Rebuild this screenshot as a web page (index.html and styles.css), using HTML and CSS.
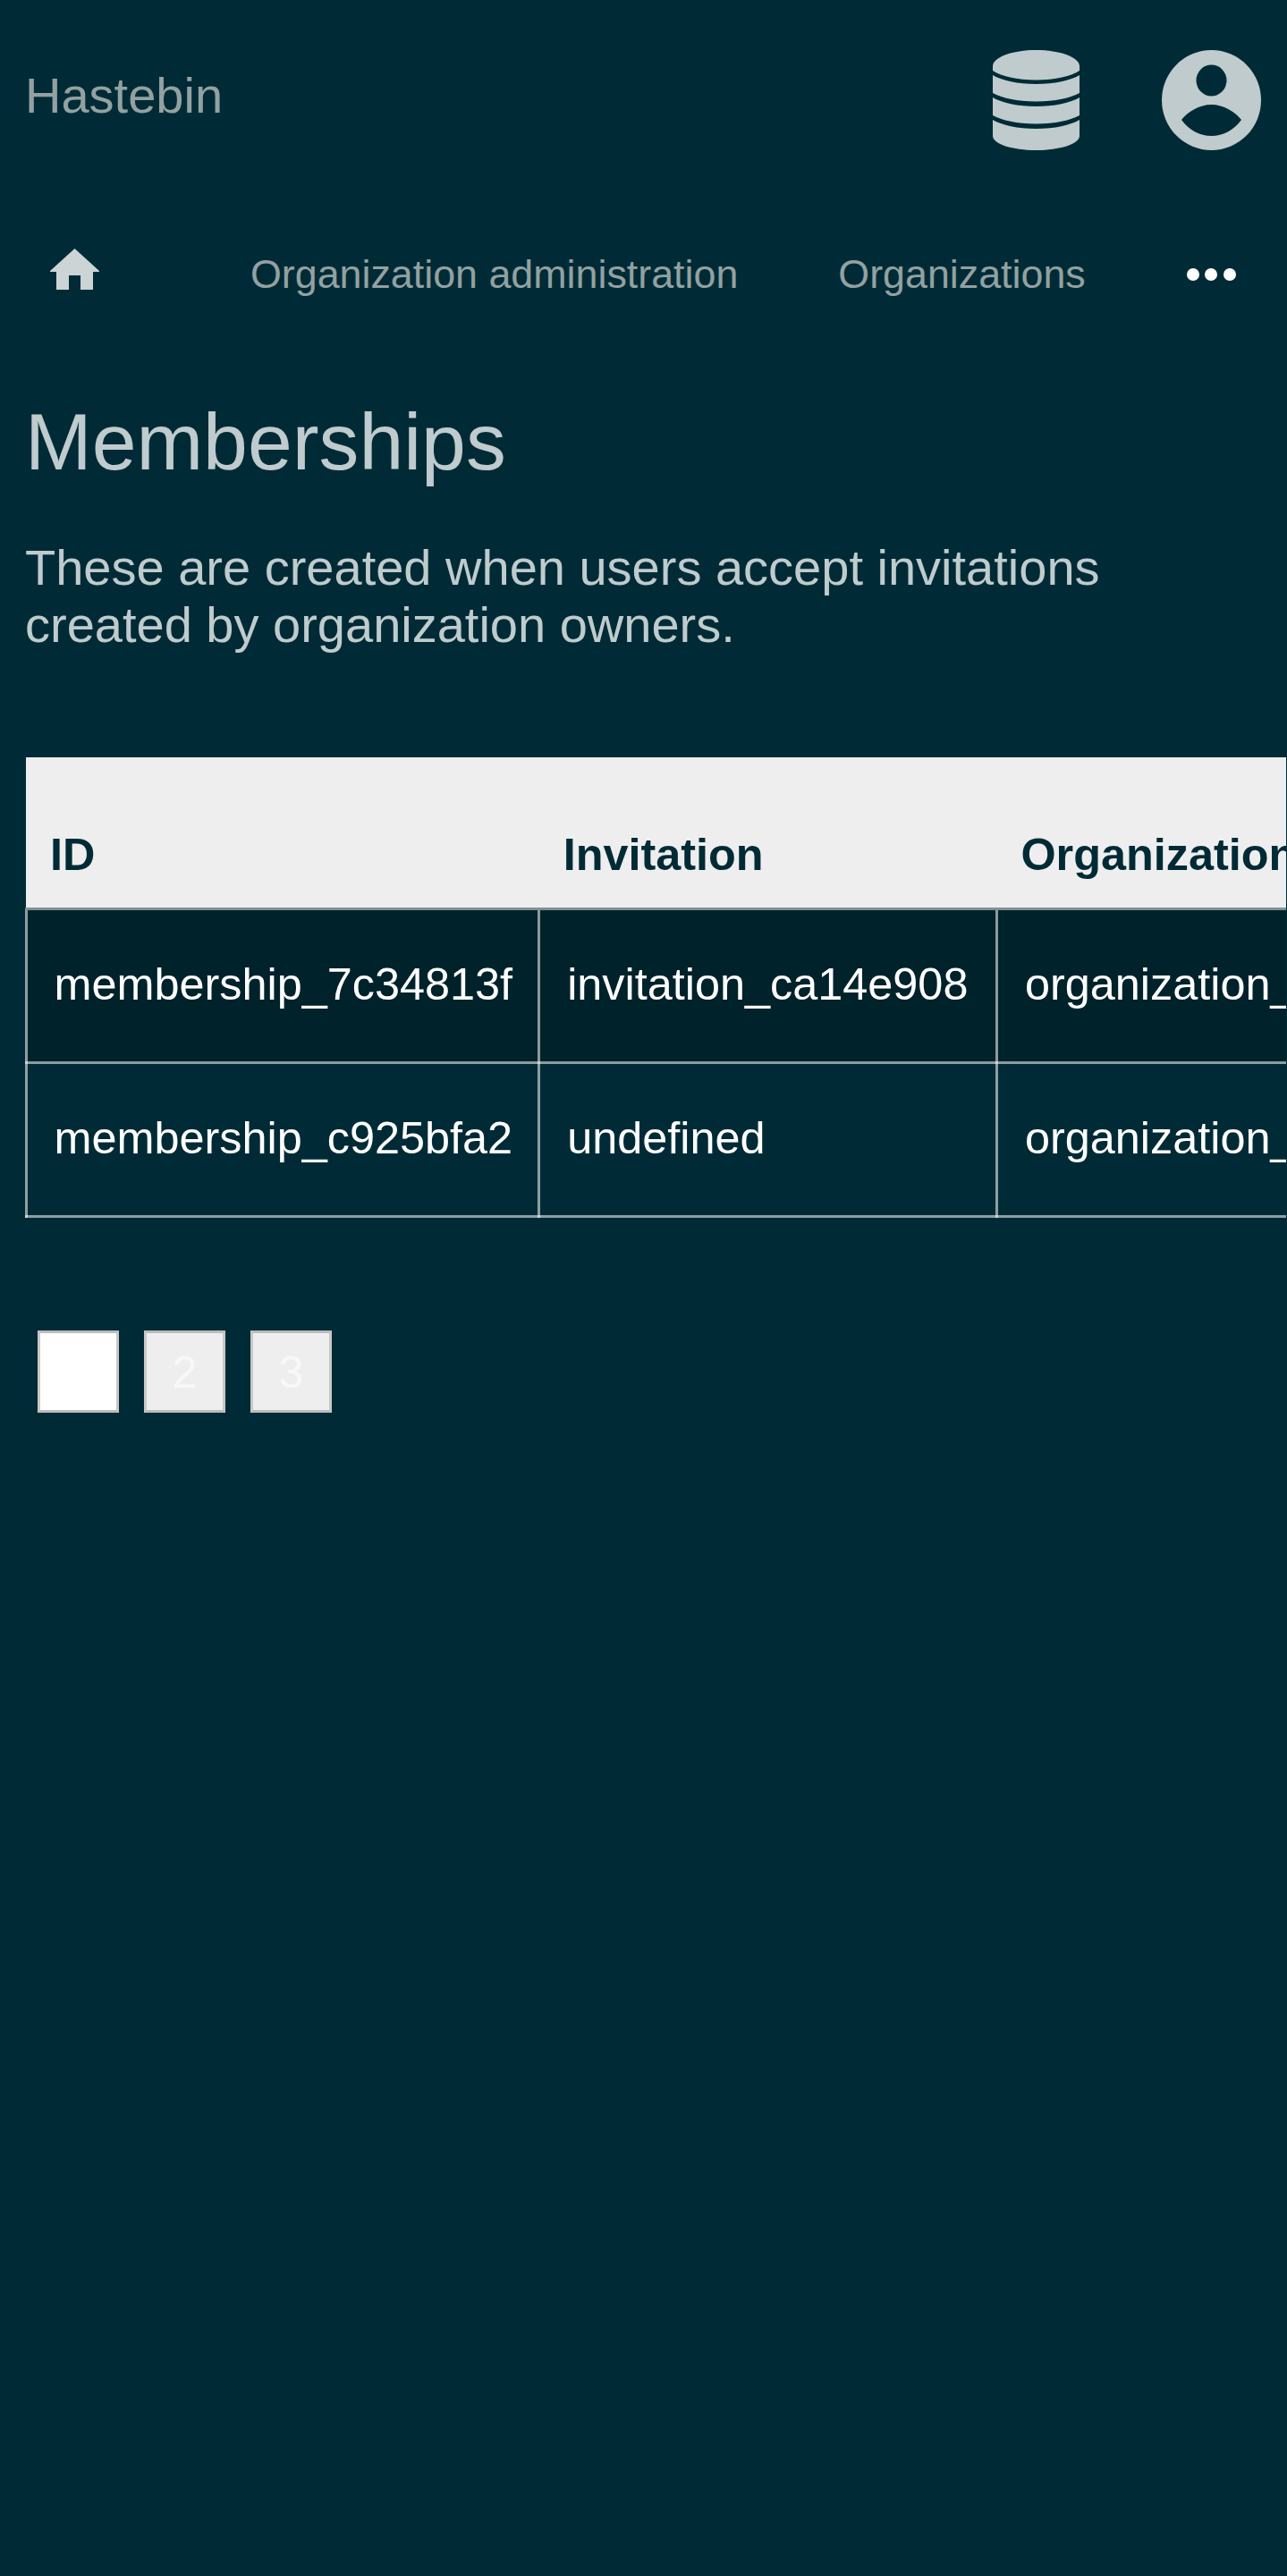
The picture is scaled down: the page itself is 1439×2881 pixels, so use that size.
FILE: index.html
```html
<!DOCTYPE html>
<html lang="en">
<head>
  <meta charset="UTF-8">
  <title>Memberships - Hastebin</title>
  <link rel="stylesheet" href="styles.css">
</head>
<body>

  <header class="topbar">
    <a class="brand" href="#">Hastebin</a>
    <div class="topbar-icons">
      <svg class="icon-db" viewBox="0 0 97 112" aria-hidden="true">
        <path d="M0 18C0 8 22 0 48.500 0S97 8 97 18v5C88 29 70 33.500 48.500 33.500S9 29 0 23z"/>
        <path d="M0 28C10 34 28 38 48.500 38S87 34 97 28V48C87 53.500 70 57.500 48.500 57.500S10 53.500 0 48z"/>
        <path d="M0 53C10 59 28 63 48.500 63S87 59 97 53V73C87 78.500 70 82.500 48.500 82.500S10 78.500 0 73z"/>
        <path d="M0 78C10 84 28 88 48.500 88S87 84 97 78V96C97 105 75 112 48.500 112S0 105 0 96z"/>
      </svg>
      <svg class="icon-user" viewBox="0 0 111 112" aria-hidden="true">
        <path fill-rule="evenodd" d="M55.500 0a55.500 56 0 1 1 0 112a55.500 56 0 1 1 0-112zM55.500 16.500a17 17.500 0 1 0 0 35a17 17.500 0 1 0 0-35zM22 78c8 11 20 18 33.500 18S81 89 89 78c-7-9-20-17-33.500-17S29 69 22 78z"/>
      </svg>
    </div>
  </header>

  <nav class="mainnav">
    <a class="nav-home" href="#">
      <svg viewBox="0 0 55 46" aria-hidden="true">
        <path d="M27.500 0L55 25V26H48V46H34V30H21V46H7V26H0V25z"/>
      </svg>
    </a>
    <a class="nav-link nav-admin" href="#">Organization administration</a>
    <a class="nav-link nav-orgs" href="#">Organizations</a>
    <a class="nav-more" href="#"><span></span><span></span><span></span></a>
  </nav>

  <main>
    <h1>Memberships</h1>
    <p class="intro">These are created when users accept invitations created by organization owners.</p>

    <div class="table-wrap">
      <table>
        <thead>
          <tr>
            <th>ID</th>
            <th>Invitation</th>
            <th>Organization</th>
          </tr>
        </thead>
        <tbody>
          <tr>
            <td>membership_7c34813f</td>
            <td>invitation_ca14e908</td>
            <td>organization_</td>
          </tr>
          <tr>
            <td>membership_c925bfa2</td>
            <td>undefined</td>
            <td>organization_</td>
          </tr>
        </tbody>
      </table>
    </div>

    <div class="pager">
      <button class="page-btn current">1</button>
      <button class="page-btn">2</button>
      <button class="page-btn">3</button>
    </div>
  </main>

</body>
</html>
```

FILE: styles.css
```css
html {
  font-size: 28px;
}
body {
  margin: 0;
  min-height: 2881px;
  background: #002b36;
  font-family: "Liberation Sans", Arial, sans-serif;
  color: #93a1a1;
  overflow-x: hidden;
}
a {
  text-decoration: none;
  color: inherit;
}
.topbar {
  display: flex;
  justify-content: space-between;
  align-items: center;
  padding: 56px 29px 0 28px;
  height: 112px;
}
.brand {
  font-size: 2rem;
  margin-bottom: 11px;
}
.topbar-icons {
  display: flex;
  gap: 92px;
  fill: #bfcbcd;
}
.icon-db {
  width: 97px;
  height: 112px;
}
.icon-user {
  width: 111px;
  height: 112px;
}
.mainnav {
  display: flex;
  align-items: center;
  height: 46px;
  margin-top: 110px;
  padding-left: 56px;
  font-size: 1.6rem;
}
.nav-home {
  display: flex;
  width: 56px;
  height: 46px;
  fill: #ccd4d6;
  margin-right: 168px;
}
.nav-link {
  white-space: nowrap;
  padding-top: 11px;
}
.nav-admin {
  margin-right: 112px;
}
.nav-more {
  display: flex;
  gap: 6.500px;
  margin-left: 113px;
  padding-top: 12px;
}
.nav-more span {
  width: 14px;
  height: 14px;
  border-radius: 50%;
  background: #fff;
}
main {
  padding: 0 0 0 28px;
}
h1 {
  margin: 117px 0 0;
  font-size: 3.2rem;
  font-weight: normal;
  line-height: 1.2;
  color: #bfcbcd;
}
.intro {
  margin: 54px 0 0;
  width: 1290px;
  font-size: 2rem;
  line-height: 64px;
  color: #bfcbcd;
}
.table-wrap {
  margin-top: 116px;
  margin-left: -0.500px;
  width: 1410.500px;
  overflow: hidden;
}
table {
  border-collapse: collapse;
  font-size: 1.8rem;
}
th {
  height: 170px;
  padding: 0 28px 30px 27px;
  box-sizing: border-box;
  background: #eee;
  color: #002b36;
  text-align: left;
  vertical-align: bottom;
  white-space: nowrap;
  border-bottom: 3px solid #80908f;
}
td {
  height: 172px;
  box-sizing: border-box;
  padding: 0 30.500px 4px 30px;
  border: 3px solid rgba(255, 255, 255, 0.55);
  color: #fff;
  white-space: nowrap;
}
td:first-child {
  padding-right: 28px;
}
tbody tr:first-child td {
  background: #00222b;
}
.pager {
  display: flex;
  gap: 28px;
  margin: 126px 0 0 14px;
}
.page-btn {
  width: 91px;
  height: 92px;
  padding: 0;
  background: #eee;
  color: #f8f8f8;
  border: 3.500px solid #c8c8c8;
  border-top-color: #bbb;
  border-bottom-color: #bbb;
  font-family: inherit;
  font-size: 1.8rem;
}
.page-btn.current {
  background: #fff;
  color: #fff;
}
```
